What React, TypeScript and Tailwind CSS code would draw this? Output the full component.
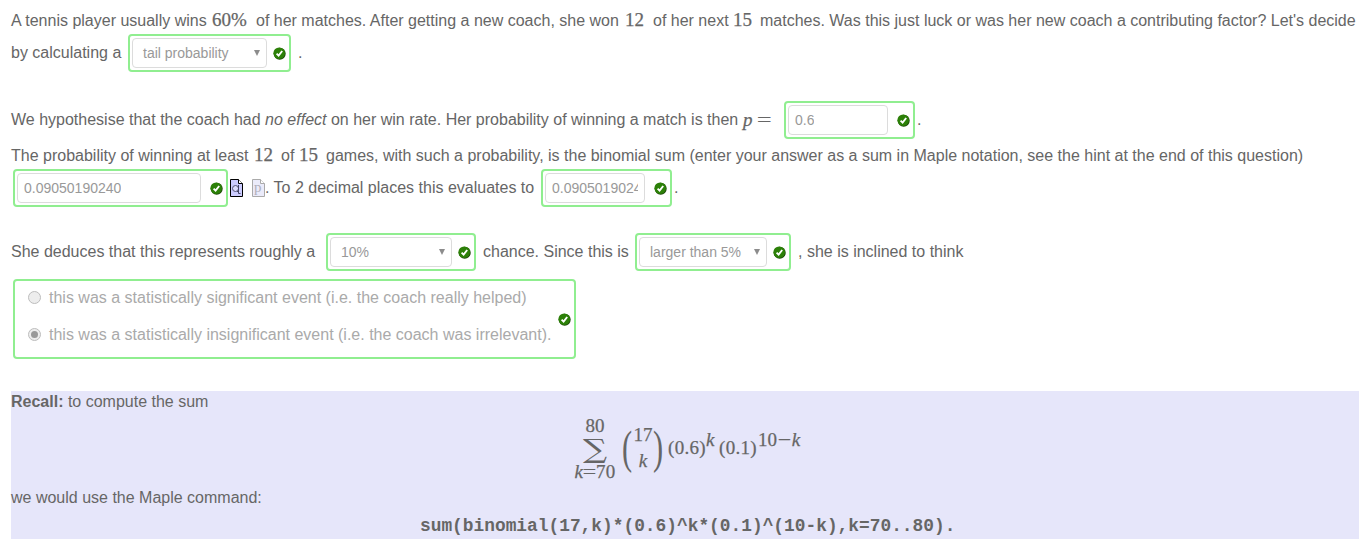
import React from "react";

function Check() {
  return (
    <svg className="mr-[1px] block h-[13px] w-[13px] shrink-0" viewBox="0 0 13 13">
      <circle cx="6.7" cy="6.8" r="6" fill="#1c4a08" />
      <circle cx="6.2" cy="6.2" r="5.8" fill="#2c8008" />
      <path d="M3.6 6.6 5.6 8.6 9.2 4" fill="none" stroke="#fff" strokeWidth="1.9" />
    </svg>
  );
}

function Box({ className, children }: { className: string; children: React.ReactNode }) {
  return (
    <span className={"flex h-[38px] shrink-0 items-center justify-between rounded-[4px] border-2 border-[#90ee90] py-[2px] pr-[2px] pl-[2px] " + className}>
      {children}
      <Check />
    </span>
  );
}

function Field({ className, children }: { className: string; children: React.ReactNode }) {
  return (
    <span className={"flex h-[30px] items-center rounded-[4px] border border-[#dcdcdc] bg-white px-[6px] text-[14px] text-[#999] " + className}>
      <span className="overflow-hidden whitespace-nowrap">{children}</span>
    </span>
  );
}

function Select({ className, children }: { className: string; children: React.ReactNode }) {
  return (
    <span className={"flex h-[30px] items-center justify-between rounded-[4px] border border-[#dcdcdc] bg-white pr-[6px] pl-[10px] text-[14px] text-[#999] " + className}>
      <span>{children}</span>
      <svg className="h-[6px] w-[6px]" viewBox="0 0 6 6">
        <path d="M0 0h6L3 6z" fill="#8c8c8c" />
      </svg>
    </span>
  );
}

function M({ className = "", children }: { className?: string; children: React.ReactNode }) {
  return <span className={"shrink-0 font-['Liberation_Serif',serif] text-[19px] leading-[19px] [-webkit-text-stroke:0.25px_#666] " + className}>{children}</span>;
}

function Radio({ checked = false }: { checked?: boolean }) {
  return (
    <span className="flex h-[13px] w-[13px] shrink-0 items-center justify-center rounded-full border border-[#bdbdbd] bg-[#ededed]">
      {checked && <span className="h-[7px] w-[7px] rounded-full bg-[#999]" />}
    </span>
  );
}

export default function App() {
  return (
    <div className="h-[543px] w-[1359px] overflow-hidden bg-white pl-[11px] font-['Liberation_Sans',sans-serif] text-[16px] leading-[20px] whitespace-pre text-[#666]">
      <div className="flex h-[34px] items-center pt-[7px]">
        <span className="w-[201px] shrink-0">A tennis player usually wins</span>
        <M className="w-[44px] pb-[3px]">60%</M>
        <span className="w-[369px] shrink-0">of her matches. After getting a new coach, she won</span>
        <M className="w-[28px] pb-[3px]">12</M>
        <span className="w-[80px] shrink-0">of her next</span>
        <M className="w-[27px] pb-[3px]">15</M>
        <span className="shrink-0">matches. Was this just luck or was her new coach a contributing factor? Let's decide</span>
      </div>
      <div className="flex h-[38px] items-center">
        <span className="w-[117px]">by calculating a</span>
        <Box className="w-[163px]"><Select className="w-[135px]">tail probability</Select></Box>
        <span className="pl-[7px]">.</span>
      </div>

      <div className="mt-[29px] flex h-[38px] items-center">
        <span className="w-[732px] shrink-0">We hypothesise that the coach had <i>no effect</i> on her win rate. Her probability of winning a match is then</span>
        <M className="w-[14px] pb-[2px] italic">p</M>
        <M className="w-[27px] pb-[1px]"><span className="inline-block origin-left scale-x-[1.35]">=</span></M>
        <Box className="w-[131px]"><Field className="w-[100px]">0.6</Field></Box>
        <span className="pl-[2px]">.</span>
      </div>
      <div className="flex h-[30px] items-center pt-[3px]">
        <span className="w-[243px] shrink-0">The probability of winning at least</span>
        <M className="w-[27px] pb-[3px]">12</M>
        <span className="w-[18px] shrink-0">of</span>
        <M className="w-[27px] pb-[3px]">15</M>
        <span className="shrink-0">games, with such a probability, is the binomial sum (enter your answer as a sum in Maple notation, see the hint at the end of this question)</span>
      </div>
      <div className="flex h-[38px] items-center pl-[2px]">
        <Box className="w-[215px]"><Field className="w-[184px]">0.09050190240</Field></Box>
        <svg className="ml-[2px] h-[18px] w-[13px] shrink-0" viewBox="0 0 13 18">
          <path d="M.5.5h8l4 4v13H.5z" fill="#ccccff" stroke="#000" />
          <path d="M8.5.5v4h4" fill="#fff" stroke="#000" />
          <circle cx="5.5" cy="9.5" r="3" fill="#ddddff" stroke="#555577" />
          <path d="M8.5 6v8.5h2M7 12l2 2" fill="none" stroke="#444466" />
        </svg>
        <svg className="ml-[9px] h-[18px] w-[13px] shrink-0" viewBox="0 0 13 18">
          <path d="M.5.5h8l4 4v13H.5z" fill="#ebebfa" stroke="#aaa" />
          <path d="M8.5.5v4h4" fill="#fff" stroke="#aaa" />
          <text x="2" y="13" fontSize="15" fontFamily="Liberation Serif" fill="#b0b0bb">p</text>
        </svg>
        <span className="w-[276px] shrink-0">. To 2 decimal places this evaluates to</span>
        <Box className="w-[131px]"><Field className="w-[100px]">0.09050190240</Field></Box>
        <span className="pl-[2px]">.</span>
      </div>

      <div className="mt-[26px] flex h-[38px] items-center">
        <span className="w-[315px] shrink-0">She deduces that this represents roughly a</span>
        <Box className="w-[150px]"><Select className="w-[122px]">10%</Select></Box>
        <span className="w-[159px] shrink-0 pl-[7px]">chance. Since this is</span>
        <Box className="w-[156px]"><Select className="w-[128px]">larger than 5%</Select></Box>
        <span className="pl-[7px]">, she is inclined to think</span>
      </div>

      <div className="mt-[8px] ml-[2px] flex h-[80px] w-[563px] items-center justify-between rounded-[4px] border-2 border-[#90ee90] pr-[2px] pl-[13px] text-[#aaa]">
        <div className="flex flex-col gap-[17px] pb-[6px]">
          <div className="flex items-center gap-[8px]"><Radio /><span>this was a statistically significant event (i.e. the coach really helped)</span></div>
          <div className="flex items-center gap-[8px]"><Radio checked /><span>this was a statistically insignificant event (i.e. the coach was irrelevant).</span></div>
        </div>
        <Check />
      </div>

      <div className="mt-[32px] h-[148px] bg-[#e6e6fa] pt-[1px]">
        <div className="h-[24px]"><b>Recall:</b> to compute the sum</div>
        <div className="flex h-[72px] items-start pl-[562px]">
          <div className="flex w-[44px] flex-col items-center">
            <M className="h-[21px]">80</M>
            <span className="flex h-[25px] w-[28px] scale-x-[1.3] items-center justify-center font-['DejaVu_Serif',serif] text-[26px] leading-[25px]">∑</span>
            <M className="h-[19px] tracking-[0.2px]"><i>k</i><span className="mx-[1px] inline-block scale-x-[1.25]">=</span>70</M>
          </div>
          <div className="ml-[5px] flex h-[62px] items-center">
            <M className="w-[11px] origin-left scale-x-[1.6] scale-y-[2.4]"><span className="[-webkit-text-stroke:0]">(</span></M>
            <div className="flex w-[20px] flex-col items-center gap-[7px] pt-[1px]"><M>17</M><M className="italic">k</M></div>
            <M className="w-[10px] origin-left scale-x-[1.6] scale-y-[2.4]"><span className="[-webkit-text-stroke:0]">)</span></M>
            <M className="ml-[5px] w-[38px] tracking-[0.3px]">(0.6)</M>
            <M className="mb-[15px] w-[13px] italic">k</M>
            <M className="w-[39px] tracking-[0.3px]">(0.1)</M>
            <M className="mb-[15px]">10<span className="mx-[2px] inline-block scale-x-[1.25]">−</span><i>k</i></M>
          </div>
        </div>
        <div className="h-[28px]">we would use the Maple command:</div>
        <div className="pl-[409px] font-['Liberation_Mono',monospace] text-[17.85px] font-bold">sum(binomial(17,k)*(0.6)^k*(0.1)^(10-k),k=70..80).</div>
      </div>
    </div>
  );
}
